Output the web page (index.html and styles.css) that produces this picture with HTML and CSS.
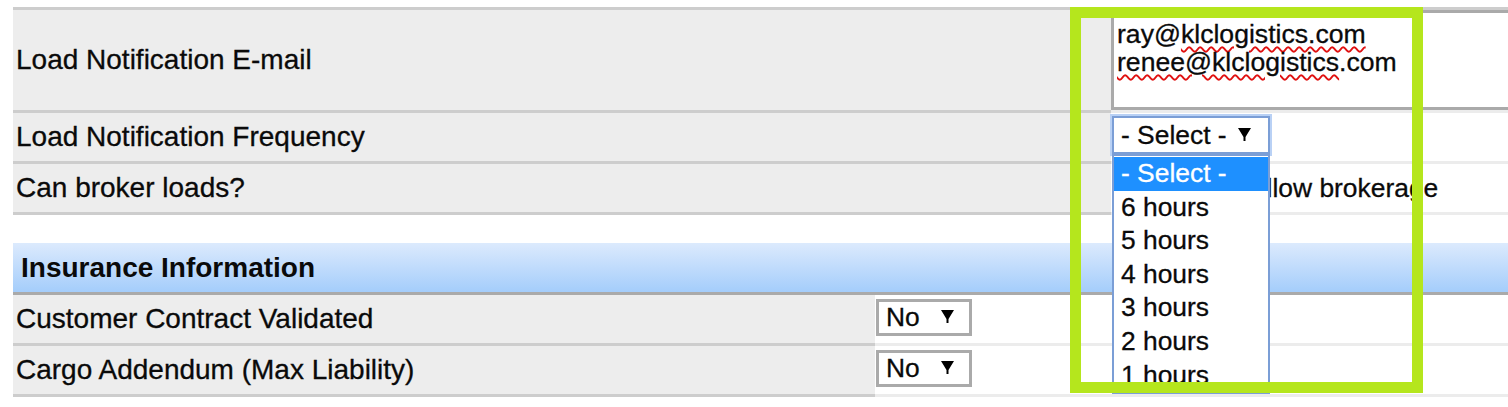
FILE: index.html
```html
<!DOCTYPE html>
<html lang="en">
<head>
    <title>Carrier Settings</title>
    <meta charset="UTF-8">
    <meta name="viewport" content="width=device-width, initial-scale=1"/>
    <link rel="stylesheet" href="styles.css">
</head>
<body>
<div class="page">
    <div class="form-table">
        <div class="row">
            <div class="label label-tall">Load Notification E-mail</div>
            <div class="value value-tall">
                <div class="email-box">
                    ray@<span class="misspelled">klclogistics.com</span><br>
                    <span class="misspelled">renee@klclogistics</span>.com
                </div>
            </div>
        </div>
        <div class="row">
            <div class="label">Load Notification Frequency</div>
            <div class="value">
                <div class="dropdown">
                    <div class="select select-open">
                        <span>- Select -</span>
                        <svg class="arrow" width="13" height="13" viewBox="0 0 13 13"><polygon points="0,0 13,0 7.5,9 7.5,13 5.5,13 5.5,9"/></svg>
                    </div>
                    <ul class="dropdown-list">
                        <li class="selected">- Select -</li>
                        <li>6 hours</li>
                        <li>5 hours</li>
                        <li>4 hours</li>
                        <li>3 hours</li>
                        <li>2 hours</li>
                        <li>1 hours</li>
                    </ul>
                </div>
            </div>
        </div>
        <div class="row">
            <div class="label">Can broker loads?</div>
            <div class="value">
                <label class="check"><input type="checkbox"><span class="check-text">Allow brokerage</span></label>
            </div>
        </div>
    </div>

    <div class="section-title">Insurance Information</div>
    <div class="form-table form-table-narrow">
        <div class="row">
            <div class="label">Customer Contract Validated</div>
            <div class="value">
                <div class="select select-small">
                    <span>No</span>
                    <svg class="arrow" width="13" height="13" viewBox="0 0 13 13"><polygon points="0,0 13,0 7.5,9 7.5,13 5.5,13 5.5,9"/></svg>
                </div>
            </div>
        </div>
        <div class="row">
            <div class="label">Cargo Addendum (Max Liability)</div>
            <div class="value">
                <div class="select select-small">
                    <span>No</span>
                    <svg class="arrow" width="13" height="13" viewBox="0 0 13 13"><polygon points="0,0 13,0 7.5,9 7.5,13 5.5,13 5.5,9"/></svg>
                </div>
            </div>
        </div>
    </div>

    <!-- annotation box drawn over the screenshot -->
    <div class="highlight"></div>
</div>
</body>
</html>
```

FILE: styles.css
```css
body {
    margin: 0;
    overflow: hidden;
    background-color: #ffffff;
    font-family: "Liberation Sans", Arial, sans-serif;
    color: #0a0a0a;
    -webkit-text-stroke: 0.3px;
}

.page {
    position: relative;
    width: 1517px;
    padding: 7px 0 0 13px;
}

.form-table {
    border-top: 3px solid #cdcdcd;
}
.form-table-narrow {
    border-top: none;
}

.row {
    display: flex;
}
.label {
    box-sizing: border-box;
    width: 1098px;
    height: 51px;
    padding-left: 3px;
    background-color: #ededed;
    border-bottom: 3px solid #cdcdcd;
    font-size: 28px;
    display: flex;
    align-items: center;
}
.form-table-narrow .label {
    width: 862px;
}
.label-tall {
    height: 103px;
}
.value {
    flex: 1;
    height: 48px;
    background-color: #ffffff;
    border-bottom: 3px solid #ececec;
    display: flex;
    align-items: flex-start;
}
.value.value-tall {
    height: 100px;
}

.email-box {
    box-sizing: border-box;
    width: 100%;
    height: 100px;
    border: 3px solid #aaaaaa;
    padding: 7px 3px;
    font-size: 26.6px;
    line-height: 28px;
}
.misspelled {
    text-decoration: underline wavy #e01010;
    text-decoration-thickness: 1.5px;
    text-underline-offset: 3px;
}

.dropdown {
    position: relative;
    margin: 3px 0 0 1px;
}
.select {
    box-sizing: border-box;
    display: flex;
    align-items: center;
    justify-content: space-between;
    font-size: 26.4px;
    background-color: #ffffff;
}
.select-open {
    width: 158px;
    height: 38px;
    padding: 0 17px 0 7px;
    border: 2px solid #7b9ed6;
    box-shadow: 0 0 0 2px #b9d1f5;
}
.select-small {
    width: 96px;
    height: 37px;
    margin: 4px 0 0 1px;
    padding: 0 15px 0 7px;
    border: 3px solid #aaaaaa;
}
.arrow {
    margin-top: -2px;
    -webkit-text-stroke: 0;
}

.dropdown-list {
    position: absolute;
    top: 100%;
    left: 0;
    z-index: 5;
    box-sizing: border-box;
    width: 158px;
    margin: 0;
    padding: 1px 0 0;
    list-style: none;
    background-color: #ffffff;
    border: 2px solid #7b9ed6;
    font-size: 26.4px;
}
.dropdown-list li {
    height: 33.6px;
    line-height: 33.6px;
    padding-left: 7px;
}
.dropdown-list li.selected {
    background-color: #1e90ff;
    color: #ffffff;
}

.check {
    display: flex;
    align-items: center;
    height: 48px;
    padding-left: 8px;
    font-size: 26.4px;
}
.check input {
    width: 18px;
    height: 18px;
    margin: 0;
}
.check-text {
    margin-left: 112px;
}

.section-title {
    box-sizing: border-box;
    height: 52px;
    margin-top: 28px;
    padding-left: 8px;
    background: linear-gradient(#dceafd, #a4cdfb);
    border-bottom: 3px solid #aaaaaa;
    font-size: 28px;
    font-weight: bold;
    -webkit-text-stroke: 0;
    display: flex;
    align-items: center;
}

.highlight {
    position: absolute;
    left: 1070px;
    top: 7px;
    z-index: 10;
    box-sizing: border-box;
    width: 353px;
    height: 386px;
    border: 11px solid #b5e61d;
}
```
